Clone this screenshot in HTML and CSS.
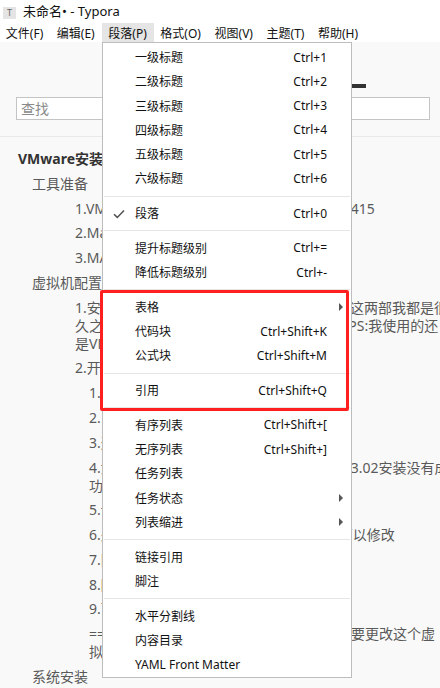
FILE: index.html
```html
<!DOCTYPE html>
<html lang="zh-CN">
<head>
<meta charset="utf-8">
<title>未命名• - Typora</title>
<link rel="stylesheet" href="styles.css">
</head>
<body>
<header class="titlebar">
  <span class="app-icon">T</span>
  <span class="title">未命名• - Typora</span>
</header>
<nav class="menubar">
  <span class="menubar-item">文件(F)</span>
  <span class="menubar-item">编辑(E)</span>
  <span class="menubar-item active">段落(P)</span>
  <span class="menubar-item">格式(O)</span>
  <span class="menubar-item">视图(V)</span>
  <span class="menubar-item">主题(T)</span>
  <span class="menubar-item">帮助(H)</span>
</nav>
<aside class="sidebar">
  <div class="tabs">
    <span class="tab">文件</span>
    <span class="tab active">大纲</span>
  </div>
  <input class="search" type="text" placeholder="查找">
  <div class="divider"></div>
  <ul class="outline">
    <li class="h1">VMware安装Mac OS</li>
    <li class="h2">工具准备</li>
    <li class="h3">1.VMware工作站专业版安装包，提取码为: 4415</li>
    <li class="h3">2.MacOS镜像</li>
    <li class="h3">3.MAC OS解锁工具</li>
    <li class="h2">虚拟机配置</li>
    <li class="h3">1.安装VMware和解锁工具的过程比较简单，这两部我都是很<br>久之前装的了，网上教程很多，不细说了。&nbsp; PS:我使用的还<br>是VMware15.5版本</li>
    <li class="h3">2.开始创建虚拟机</li>
    <li class="h4">1.选择自定义配置</li>
    <li class="h4">2.目标系统稍后安装</li>
    <li class="h4">3.选择客户机操作系统</li>
    <li class="h4">4.如果选项中没有苹果系统，就说明解锁V 3.02安装没有成<br>功</li>
    <li class="h4">5.设置虚拟机名称</li>
    <li class="h4">6.处理器和内存按电脑配置选择，之后也可以修改</li>
    <li class="h4">7.网络类型默认</li>
    <li class="h4">8.除了磁盘其他默认</li>
    <li class="h4">9.下一步完成</li>
    <li class="h4">===虚拟机创建完成后先别启动，我们还需要更改这个虚<br>拟机的配置文件</li>
    <li class="h2">系统安装</li>
  </ul>
</aside>

<div class="menu">
  <div class="menu-item"><span>一级标题</span><span>Ctrl+1</span></div>
  <div class="menu-item"><span>二级标题</span><span>Ctrl+2</span></div>
  <div class="menu-item"><span>三级标题</span><span>Ctrl+3</span></div>
  <div class="menu-item"><span>四级标题</span><span>Ctrl+4</span></div>
  <div class="menu-item"><span>五级标题</span><span>Ctrl+5</span></div>
  <div class="menu-item"><span>六级标题</span><span>Ctrl+6</span></div>
  <div class="menu-sep"></div>
  <div class="menu-item checked">
    <svg class="check" width="12" height="10" viewBox="0 0 12 10"><path d="M1 5.2 L4.3 8.4 L11 1.4" fill="none" stroke="#505050" stroke-width="1.5"/></svg>
    <span>段落</span><span>Ctrl+0</span></div>
  <div class="menu-sep"></div>
  <div class="menu-item"><span>提升标题级别</span><span>Ctrl+=</span></div>
  <div class="menu-item"><span>降低标题级别</span><span>Ctrl+-</span></div>
  <div class="menu-sep"></div>
  <div class="menu-item sub"><span>表格</span></div>
  <div class="menu-item"><span>代码块</span><span>Ctrl+Shift+K</span></div>
  <div class="menu-item"><span>公式块</span><span>Ctrl+Shift+M</span></div>
  <div class="menu-sep"></div>
  <div class="menu-item"><span>引用</span><span>Ctrl+Shift+Q</span></div>
  <div class="menu-sep"></div>
  <div class="menu-item"><span>有序列表</span><span>Ctrl+Shift+[</span></div>
  <div class="menu-item"><span>无序列表</span><span>Ctrl+Shift+]</span></div>
  <div class="menu-item"><span>任务列表</span></div>
  <div class="menu-item sub"><span>任务状态</span></div>
  <div class="menu-item sub"><span>列表缩进</span></div>
  <div class="menu-sep"></div>
  <div class="menu-item"><span>链接引用</span></div>
  <div class="menu-item"><span>脚注</span></div>
  <div class="menu-sep"></div>
  <div class="menu-item"><span>水平分割线</span></div>
  <div class="menu-item"><span>内容目录</span></div>
  <div class="menu-item"><span>YAML Front Matter</span></div>
</div>

<div class="highlight-box"></div>
</body>
</html>
```

FILE: styles.css
```css
* { box-sizing: border-box; }
html, body { margin: 0; padding: 0; }
body {
  width: 440px;
  height: 688px;
  overflow: hidden;
  position: relative;
  background: #f9f9f9;
  color: #1a1a1a;
  font-family: "Noto Sans", "Noto Sans CJK SC", sans-serif;
}

.titlebar {
  height: 22px;
  background: #fff;
  display: flex;
  align-items: center;
  padding-left: 3px;
  font-size: 13px;
}
.app-icon {
  width: 13px;
  height: 12px;
  margin-top: 3px;
  background: #e4e4e4;
  color: #666;
  font-size: 9px;
  line-height: 12px;
  text-align: center;
}
.title {
  margin-left: 7px;
  line-height: 22px;
  color: #111;
}

.menubar {
  height: 20px;
  background: #fff;
  display: flex;
  font-size: 12px;
}
.menubar-item {
  margin-top: 1px;
  height: 19px;
  line-height: 19px;
  padding: 1px 6.8px 0;
  color: #111;
}
.menubar-item:first-child { margin-left: -1px; }
.menubar-item.active { background: #e5e5e5; }

.sidebar { width: 440px; }
.tabs {
  height: 46px;
  display: flex;
  align-items: flex-end;
  padding-left: 254px;
  font-size: 12px;
}
.tab {
  width: 56px;
  text-align: center;
  padding-bottom: 8px;
  color: #555;
}
.tab.active {
  border-bottom: 4px solid #333;
  padding-bottom: 4px;
}
.search {
  display: block;
  margin: 9px 10px 0 16px;
  width: 414px;
  height: 23px;
  border: 1px solid #c4c4c4;
  background: #fff;
  padding: 0 0 0 4px;
  font-family: "Noto Sans", "Noto Sans CJK SC", sans-serif;
  font-size: 14px;
  outline: none;
}
.search::placeholder { color: #8a8a8a; }
.divider {
  margin-top: 16px;
  height: 1px;
  background: #e9e9e9;
}

.outline {
  list-style: none;
  margin: 0;
  padding: 9.6px 0 0;
  font-size: 14px;
  line-height: 18px;
  color: #595959;
  white-space: nowrap;
}
.outline li { padding: 3.4px 0; }
.outline .h1 { padding-left: 18px; font-weight: bold; color: #333; }
.outline .h2 { padding-left: 32px; }
.outline .h3 { padding-left: 75px; }
.outline .h4 { padding-left: 89px; }

.menu {
  position: absolute;
  left: 102px;
  top: 42px;
  width: 250px;
  height: 636px;
  background: #fff;
  border: 1px solid #bdbdbd;
  padding: 2px 0;
  font-size: 12px;
}
.menu-item {
  position: relative;
  height: 24.25px;
  display: flex;
  align-items: center;
  justify-content: space-between;
  padding: 0 24px 0 32px;
  color: #111;
}
.menu-sep {
  height: 1px;
  margin: 5px 1px 4.5px;
  background: #e6e6e6;
}
.check {
  position: absolute;
  left: 10px;
  top: 8px;
}
.menu-item.sub::after {
  content: "";
  position: absolute;
  right: 8px;
  top: 8px;
  border-left: 4px solid #555;
  border-top: 4px solid transparent;
  border-bottom: 4px solid transparent;
}

.highlight-box {
  position: absolute;
  left: 100px;
  top: 290px;
  width: 249px;
  height: 121px;
  border: 3px solid #ff1f1f;
  border-radius: 2px;
}
```
